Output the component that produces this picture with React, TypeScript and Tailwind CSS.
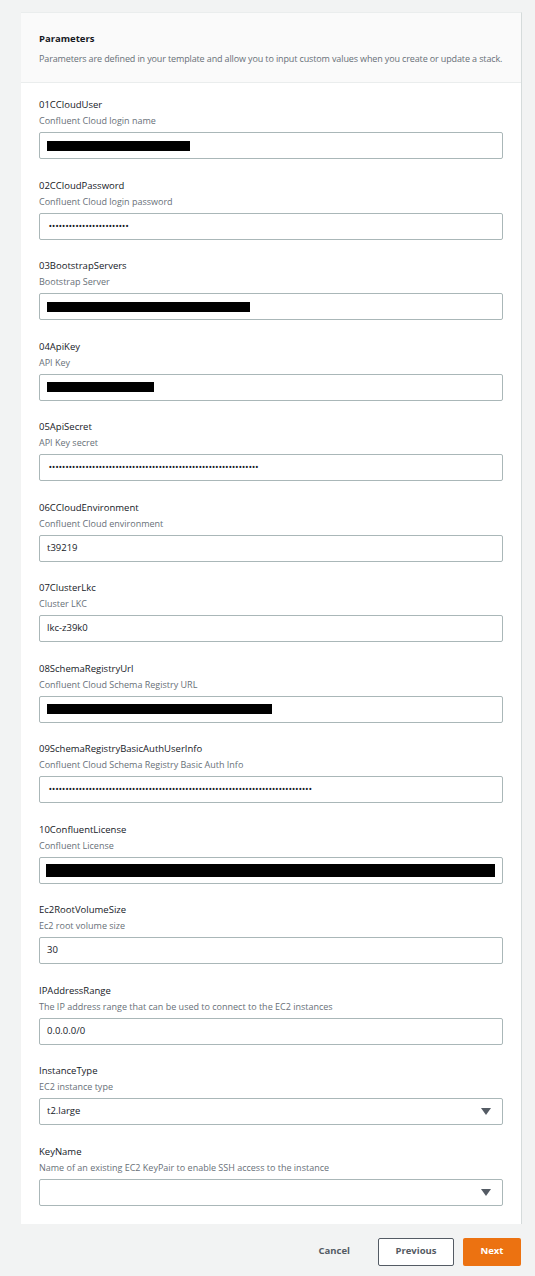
import React from 'react';

type Field = {
  name: string;
  desc: string;
  value?: string;
  redact?: number; // width of black bar
  tall?: boolean;
  dots?: number;
  select?: boolean;
};

const fields: Field[] = [
  { name: '01CCloudUser', desc: 'Confluent Cloud login name', redact: 143 },
  { name: '02CCloudPassword', desc: 'Confluent Cloud login password', dots: 24 },
  { name: '03BootstrapServers', desc: 'Bootstrap Server', redact: 203 },
  { name: '04ApiKey', desc: 'API Key', redact: 107 },
  { name: '05ApiSecret', desc: 'API Key secret', dots: 63 },
  { name: '06CCloudEnvironment', desc: 'Confluent Cloud environment', value: 't39219' },
  { name: '07ClusterLkc', desc: 'Cluster LKC', value: 'lkc-z39k0' },
  { name: '08SchemaRegistryUrl', desc: 'Confluent Cloud Schema Registry URL', redact: 225 },
  { name: '09SchemaRegistryBasicAuthUserInfo', desc: 'Confluent Cloud Schema Registry Basic Auth Info', dots: 79 },
  { name: '10ConfluentLicense', desc: 'Confluent License', redact: 449, tall: true },
  { name: 'Ec2RootVolumeSize', desc: 'Ec2 root volume size', value: '30' },
  { name: 'IPAddressRange', desc: 'The IP address range that can be used to connect to the EC2 instances', value: '0.0.0.0/0' },
  { name: 'InstanceType', desc: 'EC2 instance type', value: 't2.large', select: true },
  { name: 'KeyName', desc: 'Name of an existing EC2 KeyPair to enable SSH access to the instance', select: true },
];

function Caret() {
  return (
    <svg width="10" height="7" viewBox="0 0 10 7" className="shrink-0">
      <path d="M0 0 H10 L5 7 Z" fill="#545b64" />
    </svg>
  );
}

function FieldRow({ f }: { f: Field }) {
  return (
    <div className="flex flex-col">
      <div className="text-[9.5px] leading-[14px] text-[#16191f]">{f.name}</div>
      <div className="mt-[2px] text-[9px] leading-[14px] text-[#687078]">{f.desc}</div>
      <div className="mt-[4px] h-[27px] border border-[#aab7b8] rounded-[2px] bg-white flex items-center pl-[6px] pr-[11px]">
        {f.redact && (
          <div
            className={f.tall ? 'h-[13px] bg-black shrink-0' : 'h-[10px] bg-black ml-px shrink-0'}
            style={{ width: f.redact }}
          />
        )}
        {f.dots && (
          <span className="ml-[3px] text-[7px] font-bold tracking-[0.7px] text-[#16191f] leading-none whitespace-nowrap">
            {'•'.repeat(f.dots)}
          </span>
        )}
        {f.value && (
          <span className="ml-[1px] text-[9.5px] text-[#16191f]">{f.value}</span>
        )}
        {f.select && (
          <>
            <div className="flex-1" />
            <Caret />
          </>
        )}
      </div>
    </div>
  );
}

export default function App() {
  return (
    <div
      className="min-h-[1276px] w-[535px] bg-[#f2f3f3] pt-[12px]"
      style={{ fontFamily: '"Open Sans", "Noto Sans", Arial, sans-serif' }}
    >
      {/* Card */}
      <div className="ml-[21px] w-[501px] bg-white border-t border-[#eaeded] border-r border-r-[#d5dbdb]">
        {/* Header */}
        <div className="bg-[#fafafa] border-b border-[#eaeded] px-[18px] pt-[19px] pb-[16px]">
          <div className="text-[9.5px] leading-[14px] font-bold text-[#16191f]">Parameters</div>
          <div className="mt-[6px] text-[9px] leading-[14px] text-[#687078] whitespace-nowrap tracking-[-0.13px]">
            Parameters are defined in your template and allow you to input custom values when you create or update a stack.
          </div>
        </div>

        {/* Fields */}
        <div className="pl-[18px] pr-[18px] pt-[15px] pb-[18px] flex flex-col gap-[19.5px]">
          {fields.map((f) => (
            <FieldRow key={f.name} f={f} />
          ))}
        </div>
      </div>

      {/* Actions */}
      <div className="mt-[14px] flex items-center justify-end pr-[14px]">
        <button className="text-[9.5px] font-bold text-[#545b64] mr-[28px]">Cancel</button>
        <button className="h-[28px] w-[76px] border border-[#545b64] rounded-[2px] bg-white text-[9.5px] font-bold text-[#545b64] mr-[9px]">
          Previous
        </button>
        <button className="h-[28px] w-[58px] rounded-[2px] bg-[#ec7211] text-[9.5px] font-bold text-white">
          Next
        </button>
      </div>
    </div>
  );
}
